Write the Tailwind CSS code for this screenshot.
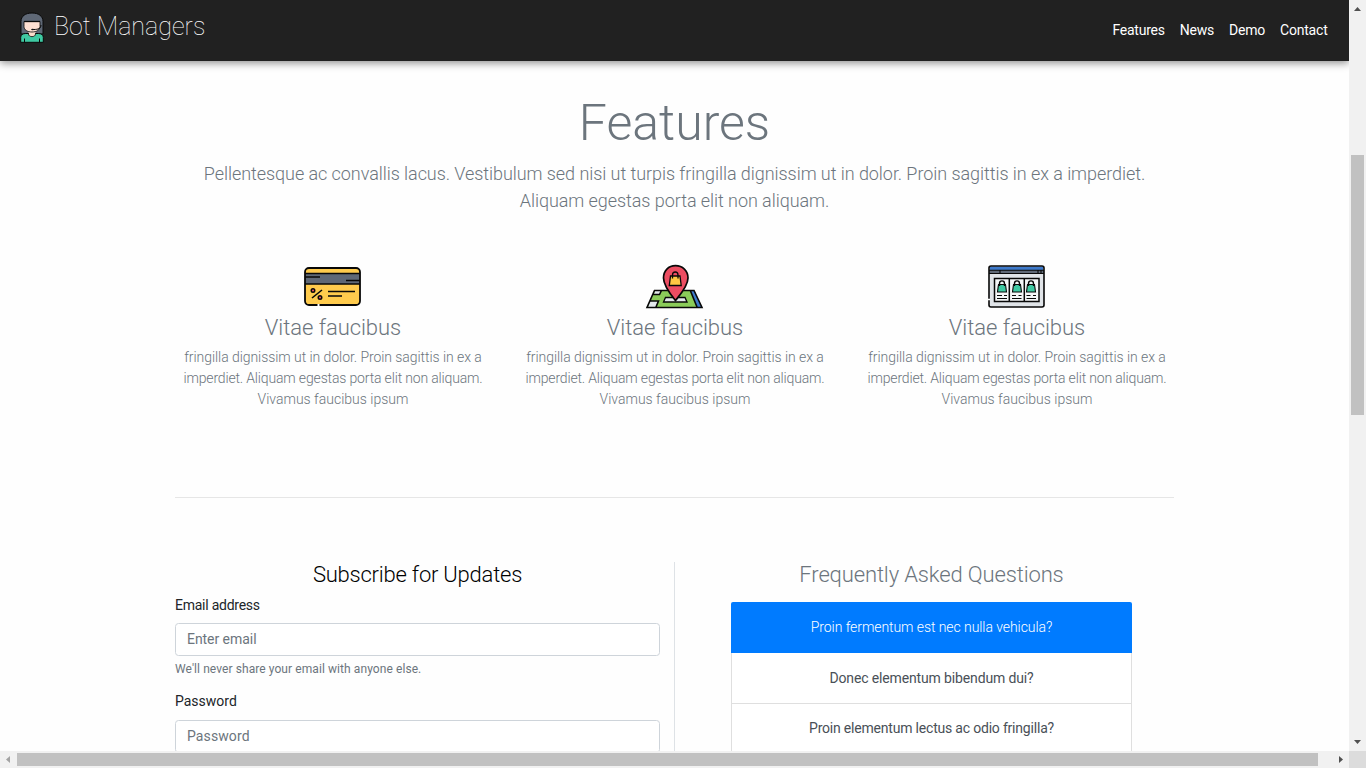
<!DOCTYPE html>
<html lang="en">
<head>
<meta charset="utf-8">
<title>Bot Managers</title>
<script src="https://cdn.jsdelivr.net/npm/@tailwindcss/browser@4"></script>
</head>
<body class="h-[768px] w-[1366px] overflow-hidden bg-white font-['Roboto',sans-serif] text-[14px] leading-[21px] text-[#212529]">
<div class="grid h-[768px] grid-cols-[1349px_17px] grid-rows-[751px_17px]">
  <div class="overflow-hidden bg-[#fefefe]">
    <header class="relative flex h-[61px] items-start justify-between bg-[#212121] pl-5 pr-[21px] text-white shadow-[0_2px_8px_rgba(0,0,0,0.45)]">
      <div class="flex items-start pt-3">
        <svg class="h-[31px] w-6" viewBox="0 0 24 31">
          <path d="M1 22V9.500C1 4 5.500 1 12 1s11 3 11 8.500V22z" fill="#5f6876" stroke="#080808" stroke-width="1"/>
          <path d="M.700 30.300v-5c0-2.300 2-3.800 5-3.800h12.600c3 0 5 1.500 5 3.800v5z" fill="#3fc9a2" stroke="#080808" stroke-width="1"/>
          <path d="M8.500 19h7v3c0 3.500-7 3.500-7 0z" fill="#fbdccb"/>
          <path d="M8.500 21v1c0 3.500 7 3.500 7 0v-1" fill="none" stroke="#080808" stroke-width=".8"/>
          <path d="M4 9.500h16v5c0 3.500-3.500 5.500-8 5.500s-8-2-8-5.500z" fill="#fddfd2" stroke="#080808" stroke-width=".8"/>
          <path d="M4 9.500h16" stroke="#080808" stroke-width="1.300"/>
          <path d="M21 13c0 3.500-3 4.500-7 4.500M4.500 26.500v4M19.500 26.500v4" fill="none" stroke="#080808" stroke-width="1"/>
          <ellipse cx="12.700" cy="17.500" rx="1.600" ry=".8" fill="#111"/>
        </svg>
        <span class="ml-[10px] text-[25px] font-thin leading-[30px]">Bot Managers</span>
      </div>
      <nav class="flex gap-[15px] pr-[0.5px] pt-5 tracking-[-0.22px]">
        <span>Features</span><span>News</span><span>Demo</span><span>Contact</span>
      </nav>
    </header>
    <main class="mx-auto w-[999px]">
      <section class="pt-[33px] text-center font-light text-[#6c757d]">
        <h1 class="text-[50px] leading-[59px]">Features</h1>
        <p class="mt-[7px] text-[18px] leading-[27px] tracking-[-0.06px]">Pellentesque ac convallis lacus. Vestibulum sed nisi ut turpis fringilla dignissim ut in dolor. Proin sagittis in ex a imperdiet.<br>Aliquam egestas porta elit non aliquam.</p>
        <div class="-ml-[13px] -mr-[14px] mt-[44px] grid grid-cols-3">
          <article class="flex flex-col items-center">
            <svg class="h-[56px] w-[76px]" viewBox="0 0 76 56">
              <rect x="10" y="10" width="55" height="37" rx="4" fill="#ffcb4d"/>
              <path d="M10 16h55v10H10z" fill="#5f6876"/>
              <rect x="10" y="10" width="55" height="37" rx="4" fill="none" stroke="#080808" stroke-width="1.800"/>
              <path d="M10 15.500h55M10 26h55M10 19h15M51 22.500h14M33 33.500h27M33 38h14M17 40l10-8" fill="none" stroke="#080808" stroke-width="1.600"/>
              <circle cx="18" cy="32.500" r="1.800" fill="#e94e60" stroke="#080808" stroke-width="1.400"/><circle cx="25" cy="39.500" r="1.800" fill="#e94e60" stroke="#080808" stroke-width="1.400"/>
              <path d="M23.500 46v2" stroke="#fff" stroke-width="2"/>
            </svg>
            <h2 class="mt-px text-[22px] leading-[25px] tracking-[-0.05px]">Vitae faucibus</h2>
            <p class="mt-[7px]"><span class="tracking-[-0.06px]">fringilla dignissim ut in dolor. Proin sagittis in ex a</span><br><span class="tracking-[-0.16px]">imperdiet. Aliquam egestas porta elit non aliquam.</span><br>Vivamus faucibus ipsum</p>
          </article>
          <article class="flex flex-col items-center">
            <svg class="h-[56px] w-[76px]" viewBox="0 0 76 56">
              <path d="M17.500 32.500H57l8 17H10z" fill="#8bcc59"/>
              <path d="M54 33h3.500l7 16H60z" fill="#3e7acb"/>
              <path d="M18 33h6l-1.500 3.500H17zM13 43h8.500l-2.500 6h-8z" fill="#e4e9ed"/>
              <path d="M28.500 39.500H48l2 4.500H26.500z" fill="#e4e9ed" stroke="#080808" stroke-width="1.300"/>
              <path d="M17.500 32.500H57l8 17H10zM53.500 33l6.500 16M16 36.500h6.500l2-4M13 43h8.500L19 49" fill="none" stroke="#080808" stroke-width="1.600"/>
              <path d="M38.500 42.500C34 37 26.500 28 26.500 20c0-7.500 5-12.300 12-12.300S51 12.500 51 20c0 8-8 17-12.500 22.500z" fill="#ec4d62" stroke="#080808" stroke-width="1.700"/>
              <path d="M33.500 18h9.500l1.200 9.500H32.300z" fill="#ffc843" stroke="#080808" stroke-width="1.300"/>
              <path d="M35.500 20.500V17c0-4 5.500-4 5.500 0v3.500" fill="none" stroke="#080808" stroke-width="1.300"/>
            </svg>
            <h2 class="mt-px text-[22px] leading-[25px] tracking-[-0.05px]">Vitae faucibus</h2>
            <p class="mt-[7px]"><span class="tracking-[-0.06px]">fringilla dignissim ut in dolor. Proin sagittis in ex a</span><br><span class="tracking-[-0.16px]">imperdiet. Aliquam egestas porta elit non aliquam.</span><br>Vivamus faucibus ipsum</p>
          </article>
          <article class="flex flex-col items-center">
            <svg class="h-[56px] w-[76px]" viewBox="0 0 76 56">
              <rect x="10" y="8" width="55" height="41" rx="2" fill="#e0e4e8"/>
              <path d="M11 8.500h53V12H11z" fill="#3e7acb"/><path d="M10 12h55v3H10z" fill="#5f6876"/>
              <rect x="10" y="8" width="55" height="41" rx="2" fill="none" stroke="#080808" stroke-width="1.600"/>
              <path d="M10 12.300h55M10 15.500h55M21 12v3M59 12v3M62 12v3" stroke="#080808" stroke-width="1.100"/>
              <path d="M15.500 20.500h44.500v23H15.500z" fill="#f5f7f8" stroke="#080808" stroke-width="1.500"/>
              <path d="M30.300 20v23M45.300 20v23" stroke="#080808" stroke-width="1.500"/>
              <path d="M9 41.500h2" stroke="#fff" stroke-width="1.500"/>
              <g fill="#3fc9a2" stroke="#080808" stroke-width="1.100">
                <path d="M19.500 26.500h7l1 7.500h-9zM34.500 26.500h7l1 7.500h-9zM48.500 26.500h7l1 7.500h-9z"/>
                <path d="M20.500 28v-2.500c0-3.500 5-3.500 5 0V28M35.500 28v-2.500c0-3.500 5-3.500 5 0V28M49.500 28v-2.500c0-3.500 5-3.500 5 0V28" fill="none" stroke-width="1.400"/>
                <path d="M18 37.500h5M25 37.500h3M18 40.500h10M33 37.500h4M39.500 37.500h3M33 40.500h9.500M47.500 37.500h4M54 37.500h3M47.500 40.500H57"/>
              </g>
            </svg>
            <h2 class="mt-px text-[22px] leading-[25px] tracking-[-0.05px]">Vitae faucibus</h2>
            <p class="mt-[7px]"><span class="tracking-[-0.06px]">fringilla dignissim ut in dolor. Proin sagittis in ex a</span><br><span class="tracking-[-0.16px]">imperdiet. Aliquam egestas porta elit non aliquam.</span><br>Vivamus faucibus ipsum</p>
          </article>
        </div>
      </section>
      <hr class="mt-[87px] border-[#e6e6e6]">
      <div class="mt-[64px] flex">
        <form class="h-[240px] w-[500px] shrink-0 border-r border-[#dee2e6] pr-[14px]">
          <h2 class="text-center text-[22px] font-light leading-[25px] tracking-[-0.22px] text-black">Subscribe for Updates</h2>
          <label class="mt-2 block tracking-[-0.25px]">Email address</label>
          <input class="mt-[7px] block h-[33px] w-full rounded-[3.500px] border border-[#ced4da] bg-white px-[11px] pb-[3px] pt-px tracking-[-0.05px] placeholder:text-[#6c757d]" placeholder="Enter email">
          <small class="mt-1 block text-[12px] leading-[18px] tracking-[0.08px] text-[#6c757d]">We'll never share your email with anyone else.</small>
          <label class="mt-[13px] block">Password</label>
          <input class="mt-[8px] block h-[33px] w-full rounded-[3.500px] border border-[#ced4da] bg-white px-[11px] pb-[3px] pt-px tracking-[0.1px] placeholder:text-[#6c757d]" placeholder="Password">
        </form>
        <section class="ml-[56px] w-[401px] text-center font-light">
          <h2 class="text-[22px] leading-[25px] tracking-[-0.14px] text-[#6c757d]">Frequently Asked Questions</h2>
          <ul class="mt-[15px] text-[#495057]">
            <li class="h-[51px] rounded-t-[2px] bg-[#007bff] leading-[50px] tracking-[-0.07px] text-white">Proin fermentum est nec nulla vehicula?</li>
            <li class="h-[51px] border-x border-b border-[#dfdfdf] bg-white leading-[50px] font-normal tracking-[-0.14px]">Donec elementum bibendum dui?</li>
            <li class="h-[51px] border-x border-b border-[#dfdfdf] bg-white leading-[48px] font-normal tracking-[-0.2px]">Proin elementum lectus ac odio fringilla?</li>
          </ul>
        </section>
      </div>
    </main>
  </div>
  <div class="flex flex-col items-center bg-[#f1f1f1]">
    <svg class="h-[17px] w-[17px] shrink-0" viewBox="0 0 17 17"><path d="M5 11l3.500-4 3.500 4z" fill="#505050"/></svg>
    <div class="mt-[138px] h-[260px] w-[13px] bg-[#c1c1c1]"></div>
    <svg class="mt-auto h-[17px] w-[17px] shrink-0" viewBox="0 0 17 17"><path d="M5 6h7l-3.500 4z" fill="#505050"/></svg>
  </div>
  <div class="flex items-center bg-[#f1f1f1]">
    <svg class="h-[17px] w-[17px] shrink-0" viewBox="0 0 17 17"><path d="M10 5v7L6 8.500z" fill="#a3a3a3"/></svg>
    <div class="h-[13px] w-[1301px] bg-[#c1c1c1]"></div>
    <svg class="ml-auto h-[17px] w-[17px] shrink-0" viewBox="0 0 17 17"><path d="M7 5v7l4-3.500z" fill="#505050"/></svg>
  </div>
  <div class="bg-[#dcdcdc]"></div>
</div>
</body>
</html>
